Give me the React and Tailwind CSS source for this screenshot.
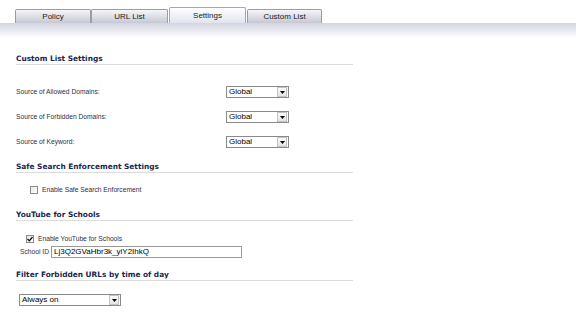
const tabs = [
  { label: "Policy", w: "w-[76px]" },
  { label: "URL List", w: "w-[77px]" },
  { label: "Settings", w: "w-[77px]", active: true },
  { label: "Custom List", w: "w-[75px]" },
];

function Tab({ label, w, active }) {
  if (active) {
    return (
      <div
        className={`${w} h-[16px] ml-[1px] mr-[1px] border border-b-0 border-[#a4a6b0] rounded-t-[2px] bg-gradient-to-b from-white to-[#e2e4ee] flex items-center justify-center text-[8px] text-[#1a1a1a]`}
      >
        {label}
      </div>
    );
  }
  return (
    <div
      className={`${w} h-[14px] border border-b-0 border-[#9a9ca6] rounded-t-[2px] bg-gradient-to-b from-[#f6f6f8] to-[#c6c8d4] flex items-center justify-center text-[8px] text-[#1a1a1a]`}
    >
      {label}
    </div>
  );
}

function Heading({ children, className = "" }) {
  return (
    <div
      className={`h-[11px] leading-[10px] border-b border-[#dcdcdc] font-['DejaVu_Sans'] font-bold text-[7.4px] text-[#1b2550] ${className}`}
    >
      {children}
    </div>
  );
}

function FakeSelect({ value, w }) {
  return (
    <div
      className={`${w} h-[12px] border border-[#8a8a8a] bg-white flex items-center justify-between text-[8px] text-black leading-none`}
    >
      <span className="pl-[2px]">{value}</span>
      <div className="w-[10px] h-[10px] mr-[1px] border border-[#c4c4c4] bg-gradient-to-b from-[#fafafa] to-[#e4e4e4] flex items-center justify-center">
        <svg width="5" height="3" viewBox="0 0 5 3">
          <path d="M0 0 H5 L2.5 3 Z" fill="#000" />
        </svg>
      </div>
    </div>
  );
}

function Checkbox({ checked }) {
  return (
    <div className="w-[8px] h-[8px] border border-[#8c8c8c] bg-gradient-to-br from-[#e8e8e8] to-white flex items-center justify-center">
      {checked && (
        <svg width="6" height="6" viewBox="0 0 6 6">
          <path d="M0.5 3 L2.3 4.8 L5.5 1" stroke="#111" strokeWidth="1.3" fill="none" />
        </svg>
      )}
    </div>
  );
}

const sources = [
  "Source of Allowed Domains:",
  "Source of Forbidden Domains:",
  "Source of Keyword:",
];

export default function App() {
  return (
    <div className="w-[576px] h-[330px] bg-white font-['Liberation_Sans',Arial,sans-serif] overflow-hidden">
      <div className="h-[23px] flex items-end pl-[15px]">
        {tabs.map((t) => (
          <Tab key={t.label} {...t} />
        ))}
      </div>
      <div className="h-[15px] bg-gradient-to-b from-[#d2d5e1] to-white" />

      <div className="pl-[16px] w-[353px]">
        <Heading className="mt-[16px]">Custom List Settings</Heading>

        <div className="mt-[21px] flex flex-col gap-[13px]">
          {sources.map((s) => (
            <div key={s} className="h-[12px] flex items-center">
              <span className="w-[210px] text-[6.7px] text-[#2c2f4a]">{s}</span>
              <FakeSelect value="Global" w="w-[63px]" />
            </div>
          ))}
        </div>

        <Heading className="mt-[14px]">Safe Search Enforcement Settings</Heading>

        <div className="mt-[12px] h-[10px] flex items-center pl-[14px] gap-[4px]">
          <Checkbox />
          <span className="text-[6.7px] text-[#2c2f4a]">Enable Safe Search Enforcement</span>
        </div>

        <Heading className="mt-[15px]">YouTube for Schools</Heading>

        <div className="mt-[13px] h-[10px] flex items-center pl-[10px] gap-[4px]">
          <Checkbox checked />
          <span className="text-[6.7px] text-[#2c2f4a]">Enable YouTube for Schools</span>
        </div>

        <div className="mt-[2px] h-[12px] flex items-center pl-[4px] gap-[2px]">
          <span className="text-[6.7px] text-[#2c2f4a]">School ID</span>
          <div className="w-[191px] h-[12px] border border-[#9a9a9a] bg-white flex items-center pl-[2px] text-[8px] text-black leading-none">
            Lj3Q2GVaHbr3k_yiY2IhkQ
          </div>
        </div>

        <Heading className="mt-[12px]">Filter Forbidden URLs by time of day</Heading>

        <div className="mt-[13px] pl-[3px]">
          <FakeSelect value="Always on" w="w-[102px]" />
        </div>
      </div>
    </div>
  );
}
